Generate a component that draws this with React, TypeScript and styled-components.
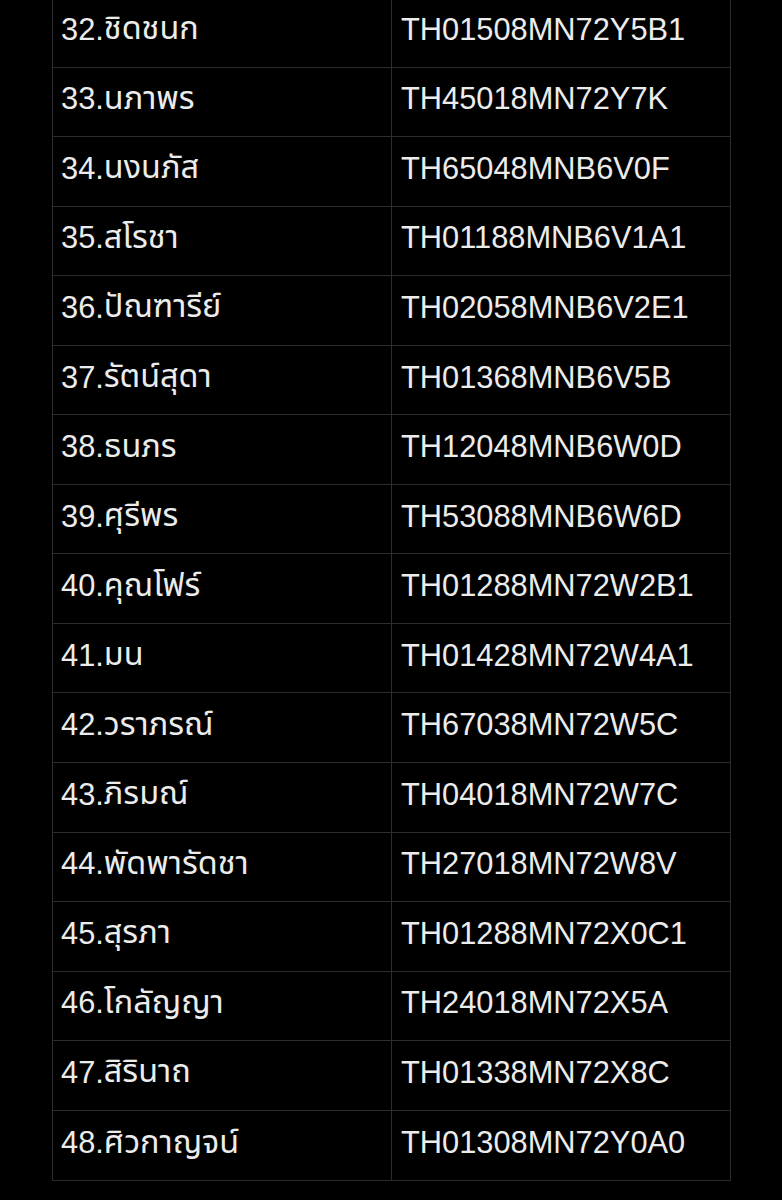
import React from "react";
import styled, { createGlobalStyle } from "styled-components";

const GlobalStyle = createGlobalStyle`
  html, body {
    margin: 0;
    padding: 0;
    background: #000;
  }
  body {
    font-family: "Liberation Sans", "Noto Sans", "Noto Sans Thai", sans-serif;
    color: #ececec;
    overflow: hidden;
  }
`;

const Page = styled.div`
  background: #000;
  height: 1200px;
  padding: 0 51px 0 52px;
`;

const Table = styled.div`
  margin-top: -2px;
  border: 1px solid #2c2c30;
  border-top: none;
  display: flex;
  flex-direction: column;
`;

const Row = styled.div<{ $last?: boolean }>`
  display: grid;
  grid-template-columns: 338px 1fr;
  height: 69.56px;
  box-sizing: border-box;
  border-bottom: ${({ $last }) => ($last ? "none" : "1px solid #2c2c30")};
`;

const Cell = styled.div<{ $code?: boolean }>`
  display: flex;
  align-items: center;
  padding: 0 ${({ $code }) => ($code ? "9px" : "8px")} 5px;
  font-size: 30.8px;
  border-left: ${({ $code }) => ($code ? "1px solid #2c2c30" : "none")};
  white-space: nowrap;
`;

const ThaiName = styled.span`
  font-size: 32.4px;
`;

const rows: [string, string][] = [
  ["32.ชิดชนก", "TH01508MN72Y5B1"],
  ["33.นภาพร", "TH45018MN72Y7K"],
  ["34.นงนภัส", "TH65048MNB6V0F"],
  ["35.สโรชา", "TH01188MNB6V1A1"],
  ["36.ปัณฑารีย์", "TH02058MNB6V2E1"],
  ["37.รัตน์สุดา", "TH01368MNB6V5B"],
  ["38.ธนภร", "TH12048MNB6W0D"],
  ["39.ศุรีพร", "TH53088MNB6W6D"],
  ["40.คุณโฟร์", "TH01288MN72W2B1"],
  ["41.มน", "TH01428MN72W4A1"],
  ["42.วราภรณ์", "TH67038MN72W5C"],
  ["43.ภิรมณ์", "TH04018MN72W7C"],
  ["44.พัดพารัดชา", "TH27018MN72W8V"],
  ["45.สุรภา", "TH01288MN72X0C1"],
  ["46.โกลัญญา", "TH24018MN72X5A"],
  ["47.สิรินาถ", "TH01338MN72X8C"],
  ["48.ศิวกาญจน์", "TH01308MN72Y0A0"],
];

export default function App() {
  return (
    <>
      <GlobalStyle />
      <Page>
        <Table>
          {rows.map(([name, code], i) => {
            const dot = name.indexOf(".") + 1;
            return (
              <Row key={name} $last={i === rows.length - 1}>
                <Cell>
                  {name.slice(0, dot)}
                  <ThaiName>{name.slice(dot)}</ThaiName>
                </Cell>
                <Cell $code>{code}</Cell>
              </Row>
            );
          })}
        </Table>
      </Page>
    </>
  );
}
